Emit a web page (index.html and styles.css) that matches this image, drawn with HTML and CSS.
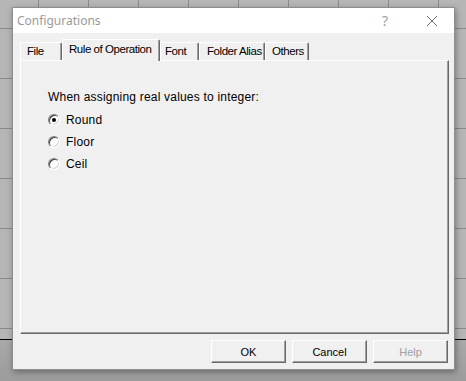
FILE: index.html
```html
<!DOCTYPE html>
<html lang="en">
<head>
  <meta charset="UTF-8" />
  <title>Configurations</title>
  <link rel="stylesheet" href="styles.css">
</head>
<body>

<div class="dialog">
  <div class="titlebar">
    <span class="title">Configurations</span>
    <span class="help-btn">?</span>
    <span class="close-btn">
      <svg width="12" height="12" viewBox="0 0 12 12"><path d="M1 1 L11 11 M11 1 L1 11" stroke="#6f6f6f" stroke-width="1" fill="none"/></svg>
    </span>
  </div>

  <div class="body">
    <div class="tabs">
      <div class="tab tab-file">File</div>
      <div class="tab tab-rule active">Rule of Operation</div>
      <div class="tab tab-font">Font</div>
      <div class="tab tab-alias">Folder Alias</div>
      <div class="tab tab-others">Others</div>
    </div>

    <div class="panel">
      <p class="prompt">When assigning real values to integer:</p>
      <div class="options">
        <label class="radio"><span class="dot checked"></span>Round</label>
        <label class="radio"><span class="dot"></span>Floor</label>
        <label class="radio"><span class="dot"></span>Ceil</label>
      </div>
    </div>

    <div class="buttons">
      <button class="btn">OK</button>
      <button class="btn">Cancel</button>
      <button class="btn disabled">Help</button>
    </div>
  </div>
</div>

</body>
</html>
```

FILE: styles.css
```css
body {
  margin: 0;
  width: 466px;
  height: 381px;
  overflow: hidden;
  padding: 7px 0 0 12px;
  box-sizing: border-box;
  font-family: 'Liberation Sans', Arial, sans-serif;
  font-size: 11px;
  color: #000;
  background:
    linear-gradient(to bottom, transparent 339px, #000 339px, #000 340px, #a9a9a9 340px, #9c9c9c 381px),
    repeating-linear-gradient(to right, transparent 0, transparent 38px, #8a8a8a 38px, #8a8a8a 39px, transparent 39px, transparent 50px),
    repeating-linear-gradient(to bottom, transparent 0, transparent 28px, #8a8a8a 28px, #8a8a8a 29px, transparent 29px, transparent 50px),
    #b6b6b6;
  background-size: 100% 100%, 50px 100%, 100% 50px, auto;
  background-repeat: no-repeat, repeat-x, repeat-y, no-repeat;
}
.dialog {
  width: 443px;
  height: 363px;
  box-sizing: border-box;
  border: 1px solid #8e8e8e;
  background: #f0f0f0;
  box-shadow: 1px 2px 6px rgba(0,0,0,0.35);
}
.titlebar {
  height: 25px;
  background: #fff;
  display: flex;
  align-items: center;
  padding-left: 4px;
}
.title {
  font-family: 'Noto Sans', 'Open Sans', sans-serif;
  font-size: 12px;
  color: #9a9a9a;
  flex: 1;
}
.help-btn {
  font-family: 'Noto Sans', sans-serif;
  font-size: 14px;
  color: #a0a0a0;
  margin-right: 38px;
}
.close-btn {
  display: flex;
  margin-right: 16px;
}
.body {
  padding: 6px 5px 0 7px;
}
.tabs {
  display: flex;
  align-items: flex-end;
  height: 21px;
  position: relative;
  z-index: 1;
}
.tab {
  height: 18px;
  box-sizing: border-box;
  border-top: 1px solid #fff;
  border-left: 1px solid #fff;
  border-right: 1px solid #696969;
  box-shadow: inset -1px 0 #a0a0a0;
  border-radius: 2px 2px 0 0;
  padding: 2px 0 0 6px;
  background: #f0f0f0;
  font-size: 11.5px;
  letter-spacing: -0.45px;
  white-space: nowrap;
  overflow: hidden;
}
.tab-file { width: 42px; }
.tab-rule { width: 98px; }
.tab-font { width: 39px; padding-left: 4px; }
.tab-alias { width: 66px; padding-left: 7px; }
.tab-others { width: 44px; }
.tab.active {
  height: 22px;
  margin-bottom: -1px;
  padding-top: 3px;
}
.panel {
  height: 274px;
  box-sizing: border-box;
  border-top: 1px solid #fff;
  border-left: 1px solid #fff;
  border-right: 1px solid #696969;
  border-bottom: 1px solid #696969;
  box-shadow: inset -1px -1px #a0a0a0;
  padding: 29px 0 0 27px;
  font-size: 12px;
  letter-spacing: 0.2px;
}
.prompt {
  margin: 0 0 9px;
  line-height: 14px;
}
.options {
  display: flex;
  flex-direction: column;
  gap: 8px;
}
.radio {
  display: flex;
  align-items: center;
  gap: 6px;
  height: 14px;
}
.dot {
  width: 12px;
  height: 12px;
  box-sizing: border-box;
  border-radius: 50%;
  border: 1px solid;
  border-color: #808080 #fff #fff #808080;
  box-shadow: inset 1px 1px #404040, inset -1px -1px #d4d4d4;
  background: #fff;
  position: relative;
}
.dot.checked::after {
  content: "";
  position: absolute;
  left: 3px;
  top: 3px;
  width: 4px;
  height: 4px;
  border-radius: 50%;
  background: #000;
}
.buttons {
  display: flex;
  justify-content: flex-end;
  gap: 6px;
  margin-top: 6px;
  padding-right: 1px;
}
.btn {
  width: 75px;
  height: 23px;
  box-sizing: border-box;
  background: #f0f0f0;
  border: 1px solid;
  border-color: #fff #696969 #696969 #fff;
  box-shadow: inset -1px -1px #a0a0a0;
  font-family: 'Liberation Sans', Arial, sans-serif;
  font-size: 11px;
  color: #000;
  padding: 0;
}
.btn.disabled {
  color: #a0a0a0;
}
```
